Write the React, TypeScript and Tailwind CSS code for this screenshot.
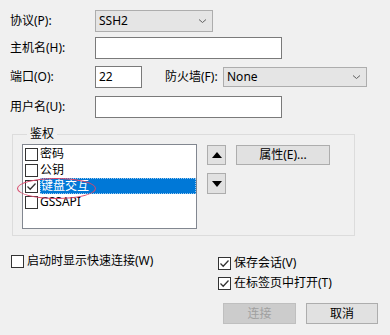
import React from "react";

function Chevron() {
  return (
    <svg width="9" height="6" viewBox="0 0 9 6" className="shrink-0">
      <path d="M1 1.5 L4.5 4.5 L8 1.5" fill="none" stroke="#606060" strokeWidth="1" />
    </svg>
  );
}

function Check() {
  return (
    <svg width="11" height="11" viewBox="0 0 11 11">
      <path d="M1.5 5.5 L4.2 8.2 L9.5 2.5" fill="none" stroke="#333" strokeWidth="1.3" />
    </svg>
  );
}

function Box({ checked = false }: { checked?: boolean }) {
  return (
    <span className="flex h-[13px] w-[13px] shrink-0 items-center justify-center border border-[#333] bg-white">
      {checked && <Check />}
    </span>
  );
}

function Label({ children, className = "" }: { children: React.ReactNode; className?: string }) {
  return <span className={`whitespace-nowrap text-[12px] leading-[16px] text-black ${className}`}>{children}</span>;
}

function Select({ value, className }: { value: string; className: string }) {
  return (
    <div
      className={`flex items-center justify-between border border-[#adadad] bg-[#e5e5e5] pl-[3px] pr-[5px] text-[12px] leading-[16px] ${className}`}
    >
      <span>{value}</span>
      <Chevron />
    </div>
  );
}

function Input({ value = "", className }: { value?: string; className: string }) {
  return (
    <div className={`flex items-center border border-[#7a7a7a] bg-white px-[3px] text-[12px] leading-[16px] ${className}`}>
      {value}
    </div>
  );
}

function ListItem({ text, checked = false, selected = false }: { text: string; checked?: boolean; selected?: boolean }) {
  return (
    <div className="flex h-[16px] items-center">
      <span className="ml-[2px]">
        <Box checked={checked} />
      </span>
      <span
        className={`ml-[2px] flex h-[16px] flex-1 items-center text-[12px] leading-[16px] ${
          selected ? "border border-dotted border-[#99c9ef] bg-[#0078d7] text-white" : "text-black"
        }`}
      >
        {text}
      </span>
    </div>
  );
}

export default function App() {
  return (
    <div className="relative h-[335px] w-[390px] overflow-hidden bg-[#f0f0f0] font-['Segoe_UI','Noto_Sans','Noto_Sans_CJK_SC',sans-serif] text-black">
      {/* form rows */}
      <div className="flex flex-col pl-[10px] pt-[10px]">
        <div className="flex h-[22px] items-center">
          <Label className="w-[85px]">协议(P):</Label>
          <Select value="SSH2" className="h-[22px] w-[118px]" />
        </div>
        <div className="mt-[5px] flex h-[22px] items-center">
          <Label className="w-[85px]">主机名(H):</Label>
          <Input className="h-[22px] w-[187px]" />
        </div>
        <div className="mt-[7px] flex h-[22px] items-center">
          <Label className="w-[85px]">端口(O):</Label>
          <Input value="22" className="h-[22px] w-[47px]" />
          <Label className="ml-[23px] w-[58px]">防火墙(F):</Label>
          <Select value="None" className="h-[20px] w-[144px]" />
        </div>
        <div className="mt-[8px] flex h-[22px] items-center">
          <Label className="w-[85px]">用户名(U):</Label>
          <Input className="h-[22px] w-[187px]" />
        </div>
      </div>

      {/* 鉴权 group */}
      <fieldset className="ml-[12px] mt-[9px] h-[109px] w-[343px] border border-[#dcdcdc] pl-[9px]">
        <legend className="ml-[5px] px-[3px] text-[12px] leading-[14px]">鉴权</legend>
        <div className="mt-[3px] flex items-start">
          <div className="h-[85px] w-[175px] border border-[#828790] bg-white pt-[1px]">
            <ListItem text="密码" />
            <ListItem text="公钥" />
            <ListItem text="键盘交互" checked selected />
            <ListItem text="GSSAPI" />
          </div>
          <div className="ml-[10px] mt-[1px] flex flex-col gap-[8px]">
            <button className="flex h-[20px] w-[19px] items-center justify-center border border-[#adadad] bg-[#e1e1e1]">
              <svg width="10" height="6" viewBox="0 0 10 6">
                <path d="M0 6 L5 0 L10 6 Z" fill="#000" />
              </svg>
            </button>
            <button className="flex h-[21px] w-[19px] items-center justify-center border border-[#adadad] bg-[#e1e1e1]">
              <svg width="10" height="6" viewBox="0 0 10 6">
                <path d="M0 0 L10 0 L5 6 Z" fill="#000" />
              </svg>
            </button>
          </div>
          <button className="ml-[10px] mt-[1px] flex h-[20px] w-[94px] items-center justify-center border border-[#adadad] bg-[#e1e1e1] text-[12px] leading-[16px]">
            属性(E)...
          </button>
        </div>
      </fieldset>

      {/* bottom options */}
      <div className="mt-[17px] flex items-start">
        <div className="ml-[11px] flex w-[150px] shrink-0 items-center gap-[3px]">
          <Box />
          <Label>启动时显示快速连接(W)</Label>
        </div>
        <div className="ml-[57px] mt-[2px] flex flex-col">
          <div className="flex items-center gap-[3px]">
            <Box checked />
            <Label>保存会话(V)</Label>
          </div>
          <div className="mt-[4px] flex items-center gap-[3px]">
            <Box checked />
            <Label>在标签页中打开(T)</Label>
          </div>
          <div className="ml-[5px] mt-[12px] flex gap-[10px]">
            <button className="flex h-[21px] w-[73px] items-center justify-center border border-[#bfbfbf] bg-[#cccccc] text-[12px] leading-[16px] text-[#a0a0a0]">
              连接
            </button>
            <button className="flex h-[21px] w-[72px] items-center justify-center border border-[#adadad] bg-[#e1e1e1] text-[12px] leading-[16px]">
              取消
            </button>
          </div>
        </div>
      </div>

      {/* red annotation ellipse */}
      <div className="absolute left-[17px] top-[178px] h-[21px] w-[79px] rounded-[50%] border border-[#d8476a]" />
    </div>
  );
}
